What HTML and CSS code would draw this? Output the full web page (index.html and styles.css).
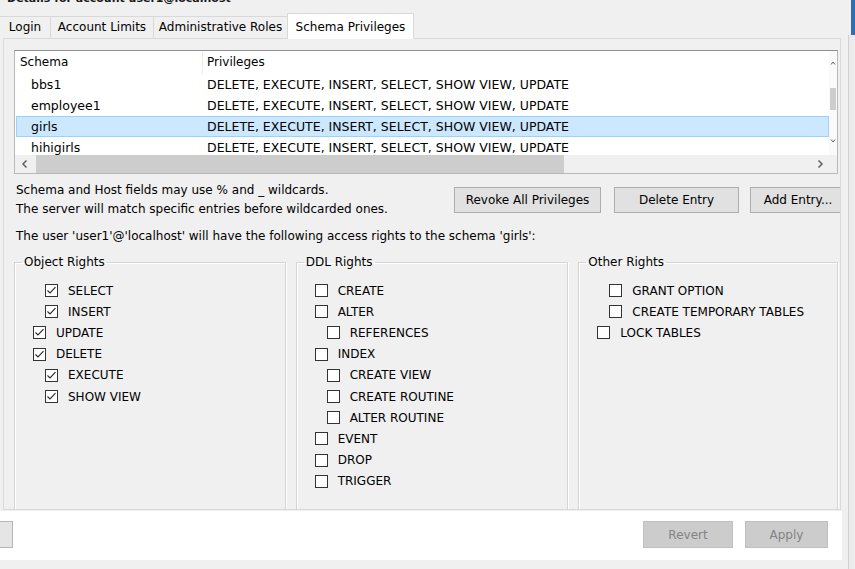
FILE: index.html
```html
<!DOCTYPE html>
<html>
<head>
<meta charset="utf-8">
<title>Schema Privileges</title>
<link rel="stylesheet" href="styles.css">
</head>
<body>
<div class="screen">
  <div class="main">
    <div class="title"><span>Details for account user1@localhost</span></div>
    <div class="tabs">
      <div class="tab t-login">Login</div>
      <div class="tab t-limits">Account Limits</div>
      <div class="tab t-roles">Administrative Roles</div>
      <div class="tab t-schema active">Schema Privileges</div>
    </div>
    <div class="page">
      <div class="list">
        <div class="list-main">
          <div class="list-head">
            <div class="hc1">Schema</div>
            <div class="hc2">Privileges</div>
          </div>
          <div class="list-rows">
            <div class="row"><div class="c1">bbs1</div><div class="c2">DELETE, EXECUTE, INSERT, SELECT, SHOW VIEW, UPDATE</div></div>
            <div class="row"><div class="c1">employee1</div><div class="c2">DELETE, EXECUTE, INSERT, SELECT, SHOW VIEW, UPDATE</div></div>
            <div class="row selected"><div class="c1">girls</div><div class="c2">DELETE, EXECUTE, INSERT, SELECT, SHOW VIEW, UPDATE</div></div>
            <div class="row"><div class="c1">hihigirls</div><div class="c2">DELETE, EXECUTE, INSERT, SELECT, SHOW VIEW, UPDATE</div></div>
          </div>
        </div>
        <div class="vscroll">
          <svg class="varrow" width="6" height="4" viewBox="0 0 6 4"><polyline points="1,3.5 3,1 5,3.5" fill="none" stroke="#606060" stroke-width="1"/></svg>
          <div class="vthumb"></div>
          <svg class="varrow down" width="6" height="4" viewBox="0 0 6 4"><polyline points="1,0.5 3,3 5,0.5" fill="none" stroke="#606060" stroke-width="1"/></svg>
        </div>
        <div class="hscroll">
          <div class="harrow"><svg width="8" height="10" viewBox="0 0 8 10"><polyline points="5.5,1.5 2,5 5.5,8.5" fill="none" stroke="#606060" stroke-width="1.5"/></svg></div>
          <div class="hthumb"></div>
          <div class="htrack"></div>
          <div class="harrow"><svg width="8" height="10" viewBox="0 0 8 10"><polyline points="2.5,1.5 6,5 2.5,8.5" fill="none" stroke="#606060" stroke-width="1.5"/></svg></div>
        </div>
        <div class="corner"></div>
      </div>

      <div class="info">
        <div class="info-text">
          <div>Schema and Host fields may use % and _ wildcards.</div>
          <div>The server will match specific entries before wildcarded ones.</div>
        </div>
        <button class="btn b-revoke">Revoke All Privileges</button>
        <button class="btn b-delete">Delete Entry</button>
        <button class="btn b-add">Add Entry...</button>
      </div>

      <div class="access">The user 'user1'@'localhost' will have the following access rights to the schema 'girls':</div>

      <div class="groups">
        <fieldset class="group g-object">
          <legend>Object Rights</legend>
          <div class="chk l2"><span class="box"><svg width="11" height="11" viewBox="0 0 11 11"><polyline points="1.5,5.5 4,8 9.5,2.2" fill="none" stroke="#2b2b2b" stroke-width="1.1"/></svg></span>SELECT</div>
          <div class="chk l2"><span class="box"><svg width="11" height="11" viewBox="0 0 11 11"><polyline points="1.5,5.5 4,8 9.5,2.2" fill="none" stroke="#2b2b2b" stroke-width="1.1"/></svg></span>INSERT</div>
          <div class="chk l1"><span class="box"><svg width="11" height="11" viewBox="0 0 11 11"><polyline points="1.5,5.5 4,8 9.5,2.2" fill="none" stroke="#2b2b2b" stroke-width="1.1"/></svg></span>UPDATE</div>
          <div class="chk l1"><span class="box"><svg width="11" height="11" viewBox="0 0 11 11"><polyline points="1.5,5.5 4,8 9.5,2.2" fill="none" stroke="#2b2b2b" stroke-width="1.1"/></svg></span>DELETE</div>
          <div class="chk l2"><span class="box"><svg width="11" height="11" viewBox="0 0 11 11"><polyline points="1.5,5.5 4,8 9.5,2.2" fill="none" stroke="#2b2b2b" stroke-width="1.1"/></svg></span>EXECUTE</div>
          <div class="chk l2"><span class="box"><svg width="11" height="11" viewBox="0 0 11 11"><polyline points="1.5,5.5 4,8 9.5,2.2" fill="none" stroke="#2b2b2b" stroke-width="1.1"/></svg></span>SHOW VIEW</div>
        </fieldset>
        <fieldset class="group g-ddl">
          <legend>DDL Rights</legend>
          <div class="chk l1"><span class="box"></span>CREATE</div>
          <div class="chk l1"><span class="box"></span>ALTER</div>
          <div class="chk l2"><span class="box"></span>REFERENCES</div>
          <div class="chk l1"><span class="box"></span>INDEX</div>
          <div class="chk l2"><span class="box"></span>CREATE VIEW</div>
          <div class="chk l2"><span class="box"></span>CREATE ROUTINE</div>
          <div class="chk l2"><span class="box"></span>ALTER ROUTINE</div>
          <div class="chk l1"><span class="box"></span>EVENT</div>
          <div class="chk l1"><span class="box"></span>DROP</div>
          <div class="chk l1"><span class="box"></span>TRIGGER</div>
        </fieldset>
        <fieldset class="group g-other">
          <legend>Other Rights</legend>
          <div class="chk l2"><span class="box"></span>GRANT OPTION</div>
          <div class="chk l2"><span class="box"></span>CREATE TEMPORARY TABLES</div>
          <div class="chk l1"><span class="box"></span>LOCK TABLES</div>
        </fieldset>
      </div>
    </div>

    <div class="footer">
      <button class="btn fb-left"></button>
      <div class="spacer"></div>
      <button class="btn disabled fb-revert">Revert</button>
      <button class="btn disabled fb-apply">Apply</button>
    </div>
  </div>
  <div class="edge">
    <div class="edge-top"></div>
    <div class="edge-rest"></div>
  </div>
</div>
</body>
</html>
```

FILE: styles.css
```css
* { box-sizing: border-box; }

html, body {
  margin: 0;
  padding: 0;
}

body {
  width: 855px;
  height: 569px;
  overflow: hidden;
  background: #f0f0f0;
  font-family: "DejaVu Sans", sans-serif;
  font-size: 12px;
  color: #000;
}

.screen {
  display: flex;
  width: 855px;
  height: 569px;
}

.main {
  width: 842px;
  display: flex;
  flex-direction: column;
}

/* cut-off title */
.title {
  height: 5px;
  overflow: hidden;
  padding-left: 7px;
}
.title span {
  display: block;
  margin-top: -8px;
  line-height: 13px;
  font-size: 11px;
  font-weight: bold;
  color: #1a1a1a;
  white-space: nowrap;
}

/* tabs */
.tabs {
  margin-top: 8px;
  height: 25px;
  display: flex;
  align-items: flex-end;
}
.tab {
  height: 22px;
  border: 1px solid #d9d9d9;
  border-bottom: none;
  margin-left: -1px;
  background: #f0f0f0;
  display: flex;
  align-items: center;
  justify-content: center;
  white-space: nowrap;
  padding-bottom: 1px;
}
.t-login { width: 52px; }
.t-limits { width: 104px; }
.t-roles { width: 135px; }
.t-schema { width: 127px; }
.tab.active {
  height: 26px;
  background: #fff;
  margin-bottom: -1px;
  position: relative;
  z-index: 1;
  padding-bottom: 0;
}

/* tab page */
.page {
  margin-left: 3px;
  width: 838px;
  height: 472px;
  border: 1px solid #d9d9d9;
  padding: 11px 2px 0 10px;
  overflow: hidden;
  display: flex;
  flex-direction: column;
}

/* list */
.list {
  width: 824px;
  height: 124px;
  flex: none;
  border: 1px solid #b8b8b8;
  border-top-color: #8f8f8f;
  background: #fff;
  display: grid;
  grid-template-columns: 1fr 8px;
  grid-template-rows: 1fr 18px;
}
.list-main {
  overflow: hidden;
  display: flex;
  flex-direction: column;
}
.list-head {
  height: 23px;
  display: flex;
  flex: none;
}
.hc1 {
  width: 187px;
  padding-left: 5px;
  line-height: 23px;
}
.hc2 {
  border-left: 1px solid #ececec;
  padding-left: 4px;
  line-height: 23px;
}
.list-rows {
  flex: 1;
  overflow: hidden;
}
.row {
  height: 21px;
  display: flex;
  align-items: center;
  font-size: 12.5px;
  white-space: nowrap;
  border: 1px solid transparent;
  margin-left: 1px;
}
.row .c1 {
  width: 191px;
  padding-left: 14px;
  flex: none;
}
.row .c2 {
  margin-left: -1px;
}
.row.selected {
  background: #cce8ff;
  border-color: #99d1ff;
}

.vscroll {
  background: #fafafa;
  display: flex;
  flex-direction: column;
  align-items: center;
}
.varrow { margin-top: 10px; flex: none; }
.varrow.down { margin-top: auto; margin-bottom: 12px; }
.vthumb {
  width: 6px;
  height: 22px;
  margin-top: 23px;
  background: #cdcdcd;
}

.hscroll {
  background: #f0f0f0;
  display: flex;
}
.harrow {
  width: 19px;
  display: flex;
  align-items: center;
  justify-content: center;
}
.hthumb {
  width: 528px;
  margin-left: 2px;
  background: #cdcdcd;
}
.htrack { flex: 1; }
.corner { background: #f0f0f0; }

/* info row */
.info {
  margin-top: 7px;
  height: 38px;
  flex: none;
  display: flex;
  align-items: flex-start;
}
.info-text {
  flex: 1;
  padding-left: 2px;
  line-height: 19px;
  white-space: nowrap;
}
.btn {
  font-family: "DejaVu Sans", sans-serif;
  font-size: 12px;
  color: #000;
  background: #e1e1e1;
  border: 1px solid #adadad;
  border-radius: 0;
  padding: 0;
  margin: 0;
  height: 26px;
  white-space: nowrap;
}
.info .btn { margin-top: 6px; flex: none; }
.b-revoke { width: 147px; }
.b-delete { width: 125px; margin-left: 13px !important; }
.b-add { width: 96px; margin-left: 11px !important; margin-right: -8px !important; }

.access {
  margin-top: 8px;
  padding-left: 2px;
  line-height: 18px;
  height: 18px;
  flex: none;
  white-space: nowrap;
}

/* group boxes */
.groups {
  margin-top: 10px;
  display: flex;
  gap: 10px;
  align-items: flex-start;
  flex: none;
}
.group {
  margin: 0;
  padding: 11px 0 0 0;
  min-width: 0;
  height: 280px;
  border: 1px solid #d5d5d5;
  box-shadow: inset 1px 1px 0 #fff, 1px 1px 0 #fff;
}
.group legend {
  margin-left: 7px;
  padding: 0 2px;
  line-height: 14px;
  font-size: 12px;
}
.g-object { width: 272px; }
.g-ddl { width: 273px; }
.g-other { width: 260px; }

.chk {
  height: 21.2px;
  display: flex;
  align-items: center;
  white-space: nowrap;
}
.chk.l1 { padding-left: 18px; }
.chk.l2 { padding-left: 30px; }
.box {
  width: 13px;
  height: 13px;
  flex: none;
  border: 1px solid #333;
  background: #fff;
  margin-right: 10px;
  display: flex;
  align-items: center;
  justify-content: center;
}
.box svg { display: block; }

/* footer */
.footer {
  margin-top: 1px;
  height: 49px;
  background: #fff;
  display: flex;
  align-items: flex-start;
  padding: 10px 14px 0 0;
  overflow: hidden;
}
.footer .btn { height: 27px; flex: none; }
.fb-left {
  width: 60px;
  margin-left: -47px !important;
  background: #e5e5e5;
  border-color: #b5b5b5;
}
.spacer { flex: 1; }
.btn.disabled {
  background: #cccccc;
  border-color: #bfbfbf;
  color: #838383;
}
.fb-revert { width: 90px; }
.fb-apply { width: 83px; margin-left: 12px !important; }

/* right edge of neighbouring window */
.edge {
  width: 13px;
  display: flex;
  flex-direction: column;
}
.edge-top {
  height: 35px;
  background: linear-gradient(to right, #f0f0f0 0 9px, #2f6eb5 9px);
}
.edge-rest {
  flex: 1;
  background: linear-gradient(to right, #f0f0f0 0 6px, #d0d0d0 6px 7px, #ebebeb 7px);
}
```
